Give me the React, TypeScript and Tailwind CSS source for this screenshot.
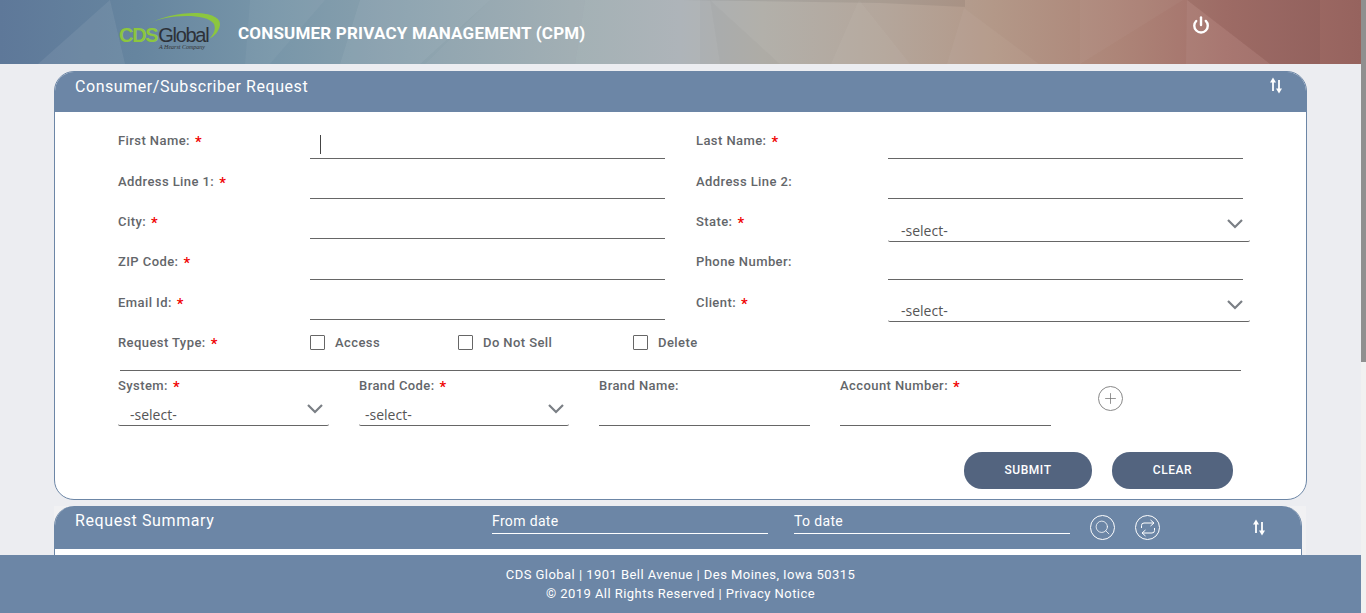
import { Power, Plus, Search } from 'lucide-react';

function Star() {
  return <span className="text-[#f00000] text-[15px] leading-[15px] ml-[5px] align-[-2px]">*</span>;
}

function Label({ text, required }: { text: string; required?: boolean }) {
  return (
    <div className="text-[13px] leading-[20px] tracking-[0.42px] text-[#63666a] font-medium">
      {text}:{required && <Star />}
    </div>
  );
}

function Chevron({ className }: { className: string }) {
  return (
    <svg className={className} width="16" height="10" viewBox="0 0 16 10" fill="none">
      <path d="M1 1 L8 8 L15 1" stroke="#7a7f85" strokeWidth="2.2" />
    </svg>
  );
}

function SortIcon() {
  return (
    <svg width="12" height="17" viewBox="0 0 12 17" fill="none">
      <path d="M3 14V4" stroke="#ffffff" strokeWidth="1.8" />
      <path d="M0 5.5L3 0.5L6 5.5Z" fill="#ffffff" />
      <path d="M9 3V13" stroke="#ffffff" strokeWidth="1.8" />
      <path d="M6 11.5L9 16.5L12 11.5Z" fill="#ffffff" />
    </svg>
  );
}

function RefreshIcon() {
  return (
    <svg width="18" height="18" viewBox="0 0 18 18" fill="none" stroke="#ffffff" strokeWidth="1">
      <path d="M2.5 9V6.5a2.5 2.5 0 0 1 2.5-2.5h10" />
      <path d="M11.5 1L15 4L11.5 7" />
      <path d="M15.5 9v2.5a2.5 2.5 0 0 1-2.5 2.5H3" />
      <path d="M6.5 11L3 14L6.5 17" />
    </svg>
  );
}

function TextInput({ caret }: { caret?: boolean }) {
  return (
    <div className="relative w-[355px] h-full">
      <input className="w-full h-full border-b border-[#666666] bg-transparent outline-none" />
      {caret && <span className="absolute left-[10px] top-[16px] w-px h-[19px] bg-[#444444]" />}
    </div>
  );
}

function SelectInput({ className, padClass, chevronClass }: { className: string; padClass: string; chevronClass: string }) {
  return (
    <div className={`relative ${className}`}>
      <select className={`w-full h-full appearance-none bg-transparent border-b border-[#666666] rounded-[2px] text-[14px] leading-[18px] text-[#555555] font-['Open_Sans',sans-serif] outline-none ${padClass}`}>
        <option>-select-</option>
      </select>
      <Chevron className={`absolute pointer-events-none ${chevronClass}`} />
    </div>
  );
}

function FormRow({ left, right, required, rightRequired, children, caret, rowClass, labelClass }: {
  left: string;
  right: string;
  required?: boolean;
  rightRequired?: boolean;
  children?: React.ReactNode;
  caret?: boolean;
  rowClass: string;
  labelClass: string;
}) {
  return (
    <div className={`flex pl-[63px] ${rowClass}`}>
      <div className={`w-[192px] ${labelClass}`}><Label text={left} required={required} /></div>
      <TextInput caret={caret} />
      <div className={`w-[192px] ml-[31px] ${labelClass}`}><Label text={right} required={rightRequired} /></div>
      {children ?? <TextInput />}
    </div>
  );
}

function CheckItem({ text, className }: { text: string; className: string }) {
  return (
    <label className={`flex items-center gap-[10px] ${className}`}>
      <span className="w-[15px] h-[15px] border border-[#666666] rounded-[1px]" />
      <span className="text-[13px] leading-[20px] tracking-[0.42px] text-[#63666a] font-medium">{text}</span>
    </label>
  );
}

function HeaderArt() {
  return (
    <svg className="absolute inset-0" width="1361" height="64" viewBox="0 0 1361 64" preserveAspectRatio="none">
      <defs>
        <linearGradient id="hdr" x1="0" x2="1" y1="0" y2="0">
          <stop offset="0" stopColor="#5e7899" />
          <stop offset="0.1" stopColor="#66859f" />
          <stop offset="0.2" stopColor="#7896a9" />
          <stop offset="0.3" stopColor="#8ba2ae" />
          <stop offset="0.42" stopColor="#9fadb2" />
          <stop offset="0.5" stopColor="#aab0b6" />
          <stop offset="0.56" stopColor="#b2b0aa" />
          <stop offset="0.65" stopColor="#b4a69b" />
          <stop offset="0.73" stopColor="#b39888" />
          <stop offset="0.82" stopColor="#ad8578" />
          <stop offset="0.9" stopColor="#a4706a" />
          <stop offset="1" stopColor="#96635e" />
        </linearGradient>
      </defs>
      <rect width="1361" height="64" fill="url(#hdr)" />
      <polygon points="110,0 125,64 38,64" fill="#ffffff" fillOpacity="0.07" />
      <polygon points="250,0 325,0 270,64 245,64" fill="#ffffff" fillOpacity="0.04" />
      <polygon points="360,0 490,0 420,64 340,64" fill="#ffffff" fillOpacity="0.05" />
      <polygon points="490,0 585,0 575,64 425,64" fill="#ffffff" fillOpacity="0.03" />
      <polygon points="585,0 700,0 700,64 575,64" fill="#ffffff" fillOpacity="0.05" />
      <polygon points="710,0 780,64 720,64" fill="#000000" fillOpacity="0.02" />
      <polygon points="859,0 910,64 831,64" fill="#ffffff" fillOpacity="0.04" />
      <polygon points="964,8 1039,64 947,64" fill="#ffffff" fillOpacity="0.04" />
      <polygon points="680,0 965,0 965,7 880,3" fill="#000000" fillOpacity="0.06" />
      <polygon points="1080,0 1183,0 1080,64" fill="#ffffff" fillOpacity="0.03" />
      <polygon points="1187,0 1186,64 1270,64" fill="#ffffff" fillOpacity="0.05" />
      <polygon points="1187,0 1320,0 1320,64 1270,64" fill="#000000" fillOpacity="0.04" />
    </svg>
  );
}

function Logo() {
  return (
    <div className="relative w-[100px] h-[46px] ml-[118px] mt-[12px] shrink-0">
      <svg className="absolute left-[25px] top-0" width="80" height="30" viewBox="0 0 80 30" fill="none">
        <path d="M3 13 C18 5 35 1 52 1 C68 1 78 6 77 13 C76 19 72 24 66 27 C71 22 73 17 71 12 C67 6 55 4 44 4 C28 4 14 7 3 13Z" fill="#8cc63f" />
      </svg>
      <div className="absolute left-[1px] top-[11px] flex items-baseline text-[20px] leading-[24px] tracking-[-1.3px] font-['Liberation_Sans',sans-serif]">
        <span className="text-[#8cc63f] font-bold mr-[1px]">CDS</span>
        <span className="text-[#2d3138]">Global</span>
      </div>
      <div className="absolute left-[41px] top-[31px] text-[6px] leading-[8px] italic text-[#333333] font-['Liberation_Serif',serif] whitespace-nowrap">A Hearst Company</div>
    </div>
  );
}

export default function App() {
  return (
    <div className="flex h-[613px] w-[1366px] overflow-hidden bg-[#ecedf1] font-['Roboto',sans-serif]">
      <div className="flex flex-col w-[1361px]">
        {/* Header */}
        <div className="relative h-[64px] shrink-0 flex overflow-hidden">
          <HeaderArt />
          <div className="relative flex w-full">
            <Logo />
            <div className="ml-[20px] mt-[23px] text-[17px] leading-[20px] font-bold tracking-[0.2px] text-white whitespace-nowrap">
              CONSUMER PRIVACY MANAGEMENT (CPM)
            </div>
            <Power className="absolute left-[1192px] top-[16px] text-white" size={18} strokeWidth={3.2} />
          </div>
        </div>

        <div className="flex-1 min-h-0 overflow-hidden pl-[54px] pt-[7px]">
          {/* Consumer request panel */}
          <div className="w-[1253px] h-[429px] rounded-[20px] border border-[#6c86a6] bg-white overflow-hidden">
            <div className="h-[40px] bg-[#6c86a6] flex justify-between pl-[20px] pr-[24px]">
              <div className="pt-[5px] text-[16px] leading-[20px] tracking-[0.55px] text-white">Consumer/Subscriber Request</div>
              <div className="pt-[5px]"><SortIcon /></div>
            </div>
            <div className="pt-[7px]">
              <FormRow left="First Name" right="Last Name" required rightRequired caret rowClass="h-[40px]" labelClass="pt-[12px]" />
              <FormRow left="Address Line 1" right="Address Line 2" required rowClass="h-[40px]" labelClass="pt-[13px]" />
              <FormRow left="City" right="State" required rightRequired rowClass="h-[40px]" labelClass="pt-[13px]">
                <SelectInput className="w-[362px] h-[43px]" padClass="pl-[13px] pt-[22px]" chevronClass="right-[7px] top-[20px]" />
              </FormRow>
              <FormRow left="ZIP Code" right="Phone Number" required rowClass="h-[41px]" labelClass="pt-[13px]" />
              <FormRow left="Email Id" right="Client" required rightRequired rowClass="h-[40px]" labelClass="pt-[13px]">
                <SelectInput className="w-[362px] h-[42px]" padClass="pl-[13px] pt-[21px]" chevronClass="right-[7px] top-[20px]" />
              </FormRow>

              <div className="flex h-[40px] pl-[63px] items-center pt-[5px]">
                <div className="w-[192px]"><Label text="Request Type" required /></div>
                <CheckItem text="Access" className="w-[148px]" />
                <CheckItem text="Do Not Sell" className="w-[175px]" />
                <CheckItem text="Delete" className="w-[100px]" />
              </div>

              <div className="ml-[65px] w-[1121px] h-[11px] border-b border-[#666666]" />

              <div className="flex pl-[63px] h-[55px] gap-[30px]">
                <div className="w-[211px] flex flex-col pt-[5px]">
                  <Label text="System" required />
                  <SelectInput className="w-full h-[30px]" padClass="pl-[12px] pt-[9px]" chevronClass="right-[6px] top-[8px]" />
                </div>
                <div className="w-[210px] flex flex-col pt-[5px]">
                  <Label text="Brand Code" required />
                  <SelectInput className="w-full h-[30px]" padClass="pl-[6px] pt-[9px]" chevronClass="right-[5px] top-[8px]" />
                </div>
                <div className="w-[211px] flex flex-col pt-[5px]">
                  <Label text="Brand Name" />
                  <div className="h-[30px] border-b border-[#666666]" />
                </div>
                <div className="w-[211px] flex flex-col pt-[5px]">
                  <Label text="Account Number" required />
                  <div className="h-[30px] border-b border-[#666666]" />
                </div>
                <div className="w-[25px] h-[25px] ml-[17px] mt-[15px] rounded-full border border-[#888888] flex items-center justify-center text-[#777777]">
                  <Plus size={17} strokeWidth={1.1} />
                </div>
              </div>

              <div className="flex pl-[909px] gap-[20px] pt-[26px]">
                <button className="w-[128px] h-[37px] rounded-[18px] bg-[#53647f] text-white text-[12px] leading-[34px] font-medium tracking-[0.55px] pb-[2px]">SUBMIT</button>
                <button className="w-[121px] h-[37px] rounded-[18px] bg-[#53647f] text-white text-[12px] leading-[34px] font-medium tracking-[0.55px] pb-[2px]">CLEAR</button>
              </div>
            </div>
          </div>

          {/* Request summary panel */}
          <div className="w-[1252px] mt-[6px] bg-[#f1f1f3] h-[60px]">
            <div className="w-[1248px] h-[60px] rounded-t-[20px] border-x border-[#6c86a6] bg-white overflow-hidden">
              <div className="h-[43px] bg-[#6c86a6] flex pl-[20px]">
                <div className="w-[417px] pt-[5px] text-[16px] leading-[20px] tracking-[0.6px] text-white">Request Summary</div>
                <div className="w-[276px] h-[28px] border-b border-white pt-[5px] text-[14px] leading-[20px] tracking-[0.35px] text-white">From date</div>
                <div className="w-[276px] h-[28px] ml-[26px] border-b border-white pt-[5px] text-[14px] leading-[20px] tracking-[0.35px] text-white">To date</div>
                <div className="w-[25px] h-[25px] ml-[20px] mt-[9px] rounded-full border border-white flex items-center justify-center text-white">
                  <Search size={17} strokeWidth={1.1} />
                </div>
                <div className="w-[25px] h-[25px] ml-[20px] mt-[9px] rounded-full border border-white flex items-center justify-center">
                  <RefreshIcon />
                </div>
                <div className="ml-[93px] mt-[13px]"><SortIcon /></div>
              </div>
            </div>
          </div>
        </div>

        {/* Footer */}
        <div className="h-[58px] shrink-0 bg-[#6c86a6] flex flex-col items-center pt-[10px] text-[13px] leading-[19px] tracking-[0.45px] text-white">
          <div>CDS Global | 1901 Bell Avenue | Des Moines, Iowa 50315</div>
          <div>© 2019 All Rights Reserved | Privacy Notice</div>
        </div>
      </div>

      {/* Scrollbar */}
      <div className="w-[5px] bg-[#f1f1f1]">
        <div className="h-[362px] bg-[#8f8f8f]" />
      </div>
    </div>
  );
}
